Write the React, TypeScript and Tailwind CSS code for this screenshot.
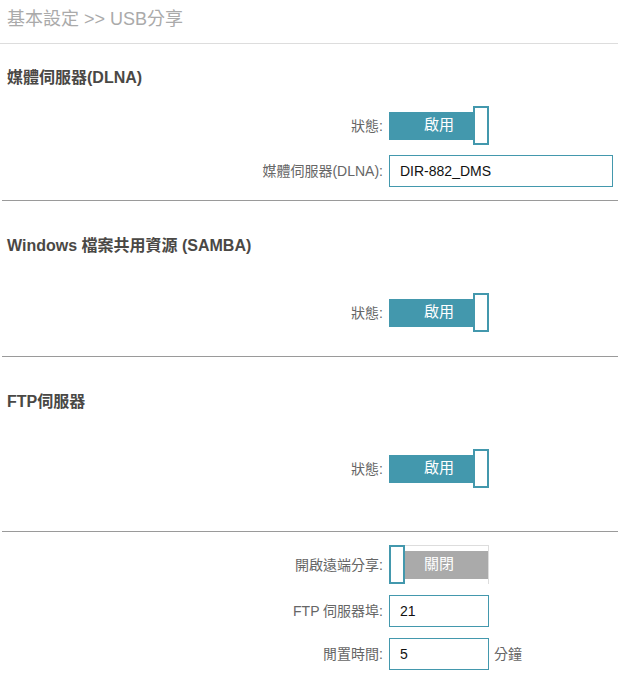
import React from "react";

const FONT = { fontFamily: '"Liberation Sans", Arial, "Noto Sans CJK TC", sans-serif' };

function Toggle({ on, label }: { on: boolean; label: string }) {
  return (
    <div className="relative h-[39px] w-[100px]">
      {on ? (
        <div className="flex h-full items-start">
          <div className="mt-[6px] h-[28px] w-[84px] bg-[#4398ad]" />
          <div className="h-[39px] w-[16px] border-2 border-[#4398ad] bg-white" />
        </div>
      ) : (
        <div className="flex h-full items-start">
          <div className="h-[39px] w-[16px] border-2 border-[#4398ad] bg-white" />
          <div className="h-full w-[84px] border-t border-r border-[#dddddd]">
            <div className="mt-[5px] h-[28px] w-full bg-[#aaaaaa]" />
          </div>
        </div>
      )}
      <div className="pointer-events-none absolute inset-0 flex items-center justify-center text-[15px] text-white">
        {label}
      </div>
    </div>
  );
}

function Row({ label, children, className = "" }: { label: string; children: React.ReactNode; className?: string }) {
  return (
    <div className={"flex items-center " + className}>
      <div className="w-[383px] text-right text-[14px] leading-[18px] text-[#666666]">{label}</div>
      <div className="ml-[6px] flex items-center">{children}</div>
    </div>
  );
}

function Input({ value, w }: { value: string; w: string }) {
  return (
    <div className={"flex h-[32px] items-center border border-[#4398ad] bg-white pl-[10px] text-[14px] text-[#111111] " + w}>
      {value}
    </div>
  );
}

function Divider() {
  return <div className="ml-[2px] h-px bg-[#9a9a9a]" />;
}

function Title({ children, className = "" }: { children: React.ReactNode; className?: string }) {
  return (
    <div className={"px-[7px] text-[16px] font-bold leading-[22px] text-[#4a4845] " + className}>{children}</div>
  );
}

export default function App() {
  return (
    <div className="h-[674px] w-[618px] overflow-hidden bg-white" style={FONT}>
      <div className="flex h-[44px] items-center border-b border-[#dddddd] px-[7px] pb-[5px] text-[18px] text-[#aaaaaa]">
        基本設定 &gt;&gt; USB分享
      </div>

      <section className="pt-[23px] pb-[13px]">
        <Title>媒體伺服器(DLNA)</Title>
        <Row label="狀態:" className="mt-[17px]">
          <Toggle on label="啟用" />
        </Row>
        <Row label="媒體伺服器(DLNA):" className="mt-[10px]">
          <Input value="DIR-882_DMS" w="w-[224px]" />
        </Row>
      </section>
      <Divider />

      <section className="pt-[34px] pb-[24px]">
        <Title>Windows 檔案共用資源 (SAMBA)</Title>
        <Row label="狀態:" className="mt-[36px]">
          <Toggle on label="啟用" />
        </Row>
      </section>
      <Divider />

      <section className="pt-[34px] pb-[43px]">
        <Title>FTP伺服器</Title>
        <Row label="狀態:" className="mt-[36px]">
          <Toggle on label="啟用" />
        </Row>
      </section>
      <Divider />

      <section className="pt-[13px]">
        <Row label="開啟遠端分享:">
          <Toggle on={false} label="關閉" />
        </Row>
        <Row label="FTP 伺服器埠:" className="mt-[11px]">
          <Input value="21" w="w-[100px]" />
        </Row>
        <Row label="閒置時間:" className="mt-[11px]">
          <Input value="5" w="w-[100px]" />
          <span className="ml-[5px] text-[14px] text-[#666666]">分鐘</span>
        </Row>
      </section>
    </div>
  );
}
